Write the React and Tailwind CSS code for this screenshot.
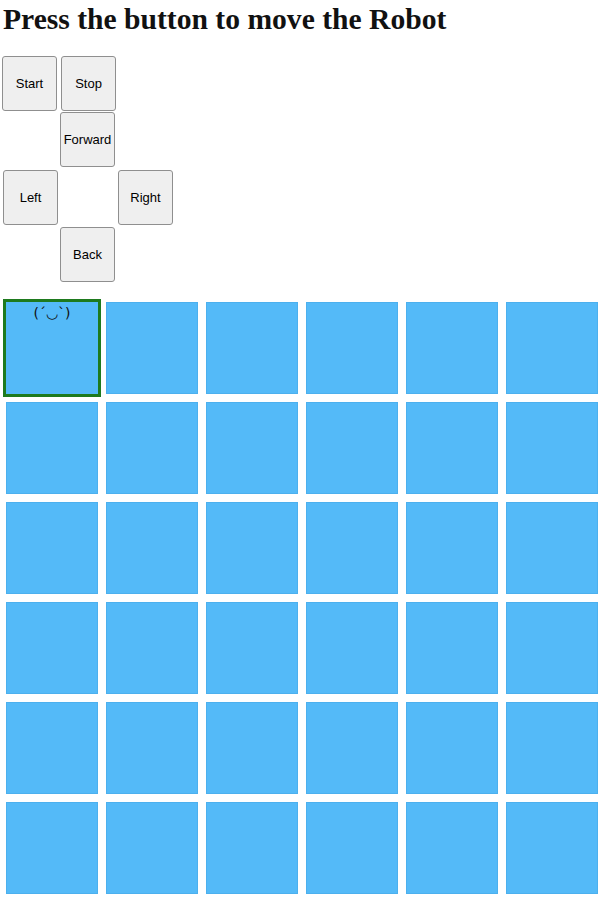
import React from "react";

const btn =
  "w-[55px] h-[55px] bg-[#efefef] border border-[#8f8f8f] rounded-[3px] text-[13px] text-black flex items-center justify-center shrink-0";

export default function App() {
  const rows = [0, 1, 2, 3, 4, 5];
  const cols = [0, 1, 2, 3, 4, 5];
  return (
    <div className="w-[608px] min-h-[900px] bg-white" style={{ fontFamily: "'Liberation Sans', Arial, sans-serif" }}>
      <h1 className="text-[29.6px] font-bold leading-[37px] pl-[3px] pt-[1px] text-[#111]" style={{ fontFamily: "'Liberation Serif', 'Times New Roman', serif" }}>
        Press the button to move the Robot
      </h1>
      <div className="mt-[18px] flex flex-col">
        <div className="flex pl-[2px] gap-[4px]">
          <button className={btn}>Start</button>
          <button className={btn}>Stop</button>
        </div>
        <div className="flex pl-[60px] mt-[1px]">
          <button className={btn}>Forward</button>
        </div>
        <div className="flex pl-[3px] mt-[3px] gap-[60px]">
          <button className={btn}>Left</button>
          <button className={btn}>Right</button>
        </div>
        <div className="flex pl-[60px] mt-[2px]">
          <button className={btn}>Back</button>
        </div>
      </div>
      <div className="mt-[16px] pl-[2px] grid grid-cols-[repeat(6,100px)] grid-rows-[repeat(6,100px)]">
        {rows.map((r) =>
          cols.map((c) =>
            r === 0 && c === 0 ? (
              <div key={`${r}-${c}`} className="w-[98px] h-[98px] m-[1px] bg-[#54baf8] border-[3px] border-[#1e7a1e] flex justify-center">
                <span className="text-[14px] leading-[18px] mt-[2px] text-[#111]" style={{ fontFamily: "'DejaVu Sans', sans-serif" }}>(´◡`)</span>
              </div>
            ) : (
              <div key={`${r}-${c}`} className="w-[92px] h-[92px] m-[4px] bg-[#54baf8] border border-[#4cb0ee]" />
            )
          )
        )}
      </div>
    </div>
  );
}
